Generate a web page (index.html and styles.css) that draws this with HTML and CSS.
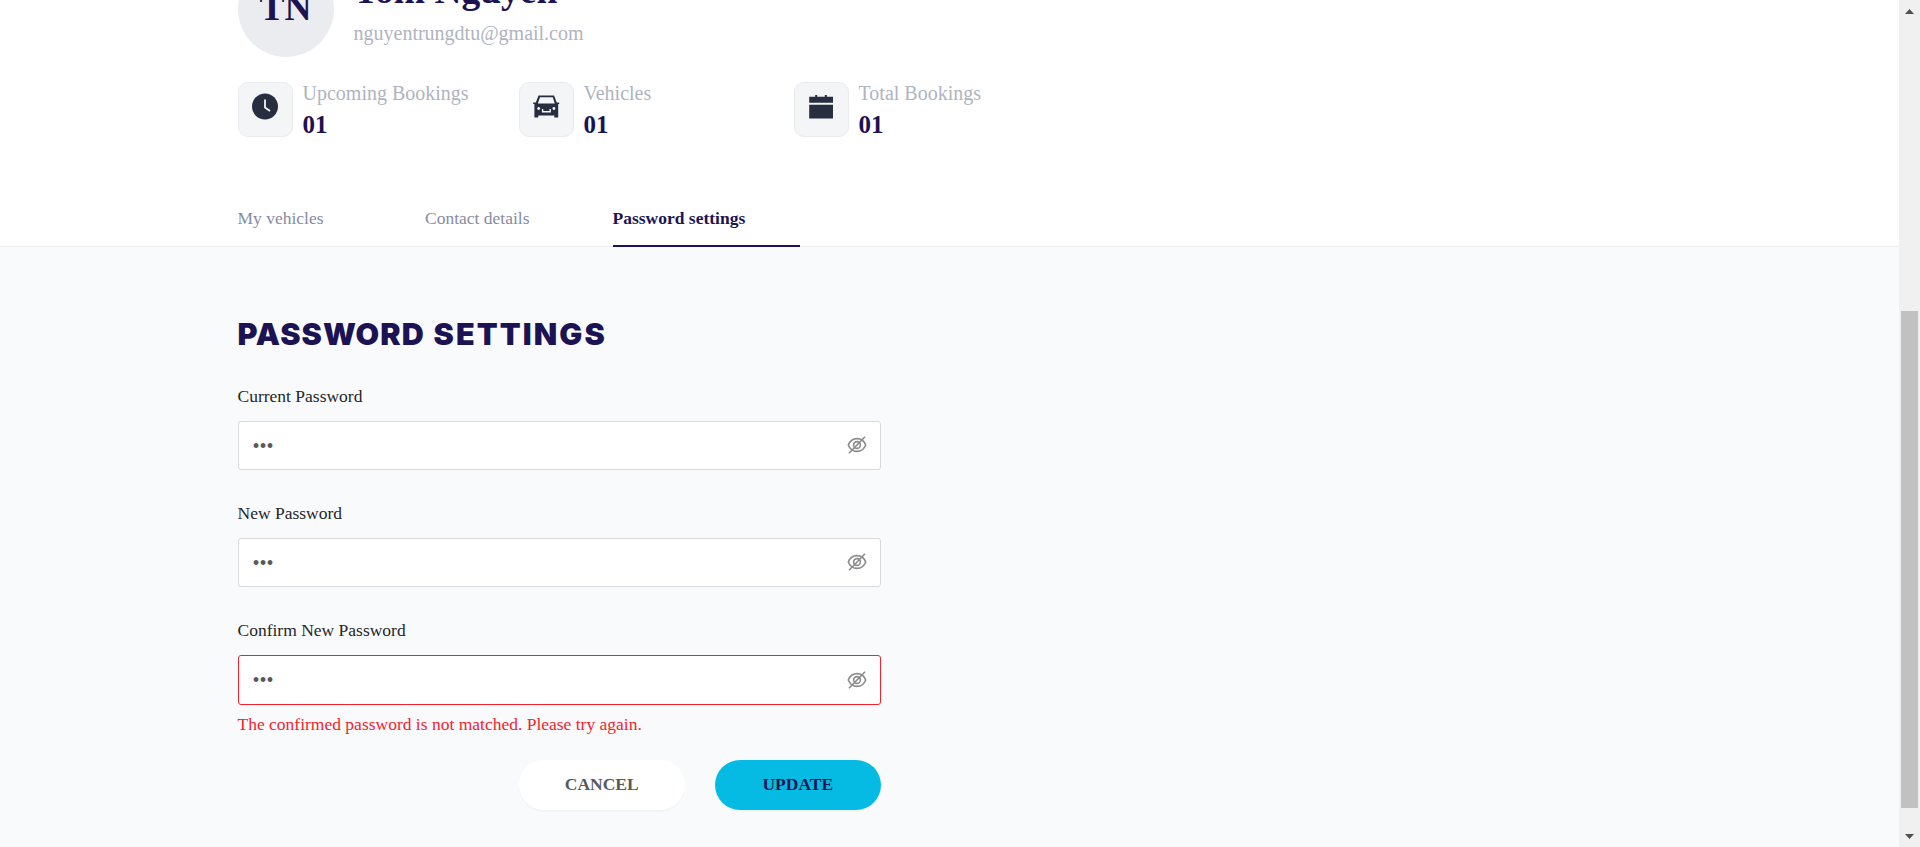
FILE: index.html
```html
<!DOCTYPE html>
<html lang="en">
<head>
<meta charset="utf-8">
<title>Password settings</title>
<link rel="stylesheet" href="styles.css">
</head>
<body>
<svg class="defs" aria-hidden="true">
  <symbol id="eye-off" viewBox="0 0 20 18">
    <path d="M1.300 9C3 4.600 6 2.600 10 2.600S17 4.600 18.700 9C17 13.400 14 15.400 10 15.400S3 13.400 1.300 9z"/>
    <circle cx="10" cy="9" r="3.4"/>
    <path d="M2 17.200 18 .8"/>
  </symbol>
</svg>
<div class="window">
  <main class="page">
    <header class="profile">
      <div class="identity">
        <div class="avatar">TN</div>
        <div class="who">
          <h1 class="name">Tom Nguyen</h1>
          <p class="email">nguyentrungdtu@gmail.com</p>
        </div>
      </div>
      <div class="stats">
        <div class="stat">
          <div class="tile"><svg width="27" height="27" viewBox="0 0 27 27"><circle cx="13" cy="13.5" r="13" fill="#272e3f"/><path d="M13 6.500v8l5 3.400" fill="none" stroke="#f4f5f7" stroke-width="1.8"/></svg></div>
          <div class="stat-text"><span class="stat-label">Upcoming Bookings</span><strong class="stat-value">01</strong></div>
        </div>
        <div class="stat">
          <div class="tile"><svg width="27" height="27" viewBox="0 0 27 27"><path fill="#272e3f" fill-rule="evenodd" d="M5.500 2.600h15.600l2.600 7h2.500v1.500h-1v13.500h-3.900v-2H5.300v2H1.400V11.100H.2V9.600h2.600zM7 4.300 4.800 10.400h17L19.700 4.300z"/><circle cx="5.700" cy="15.500" r="1.400" fill="#f4f5f7"/><circle cx="20.900" cy="15.500" r="1.400" fill="#f4f5f7"/><path d="M9.600 16v2.700h7.600V16" fill="none" stroke="#f4f5f7" stroke-width="1.400"/></svg></div>
          <div class="stat-text"><span class="stat-label">Vehicles</span><strong class="stat-value">01</strong></div>
        </div>
        <div class="stat">
          <div class="tile"><svg width="27" height="27" viewBox="0 0 27 27"><path fill="#272e3f" d="M1.200 3.800h6V2h2v1.800h7.600V2h2v1.800h6.200v6h-23.800zM1.200 11.700h23.800v13.700h-23.800z"/></svg></div>
          <div class="stat-text"><span class="stat-label">Total Bookings</span><strong class="stat-value">01</strong></div>
        </div>
      </div>
      <nav class="tabs">
        <a class="tab">My vehicles</a>
        <a class="tab">Contact details</a>
        <a class="tab active">Password settings</a>
      </nav>
    </header>
    <section class="settings">
      <h2 class="title">PASSWORD <span class="title-wide">SETTINGS</span></h2>
      <form class="form">
        <div class="field"><label class="label">Current Password</label>
          <div class="input"><span class="dots">•••</span><svg class="eye"><use href="#eye-off"/></svg></div></div>
        <div class="field"><label class="label">New Password</label>
          <div class="input"><span class="dots">•••</span><svg class="eye"><use href="#eye-off"/></svg></div></div>
        <div class="field"><label class="label">Confirm New Password</label>
          <div class="input invalid"><span class="dots">•••</span><svg class="eye"><use href="#eye-off"/></svg></div></div>
        <p class="error">The confirmed password is not matched. Please try again.</p>
        <div class="actions">
          <button type="button" class="btn cancel">CANCEL</button>
          <button type="button" class="btn update">UPDATE</button>
        </div>
      </form>
    </section>
  </main>
  <aside class="scrollbar">
    <svg class="arrow" viewBox="0 0 9 5"><path d="M0 5 4.500 0 9 5z"/></svg>
    <div class="thumb"></div>
    <svg class="arrow down" viewBox="0 0 9 5"><path d="M0 0 4.500 5 9 0z"/></svg>
  </aside>
</div>
</body>
</html>
```
FILE: styles.css
```css
* { box-sizing: border-box; margin: 0; padding: 0; }
body { font-family: "Liberation Serif", "Times New Roman", serif; overflow: hidden; font-size: 17.5px; }
.defs { display: none; }
.window { display: flex; height: 847px; overflow: hidden; }
.page { flex: 1; height: 847px; overflow: hidden; background: #f9fafc; }
.profile { background: #fff; padding-left: 237.500px; box-sizing: content-box; display: flex; flex-direction: column; border-bottom: 1px solid #eee; height: 246px; }
.identity { display: flex; gap: 20px; margin-top: -39px; height: 96px; }
.avatar { width: 96px; height: 96px; border-radius: 50%; background: #ebecf0; color: #1c1452; font-weight: bold; font-size: 37.500px; line-height: 93px; text-align: center; }
.name { color: #1c1452; font-size: 37.5px; line-height: 44px; margin-top: 8px; }
.email { color: #afb4c0; font-size: 20px; line-height: 24px; margin-top: 8px; }
.stats { display: flex; margin-top: 25px; height: 55px; }
.stat { display: flex; gap: 10px; width: 281px; }
.stat:nth-child(2) { width: 275px; }
.tile { width: 55px; height: 55px; border-radius: 10px; border: 1px solid #ebecf0; background: #f4f5f7; padding: 10px 13px; }
.tile svg { display: block; }
.stat-text { display: flex; flex-direction: column; }
.stat-label { color: #afb4c0; font-size: 20px; line-height: 24px; margin-top: -1px; }
.stat-value { color: #1c1452; font-size: 25px; line-height: 30px; margin-top: 5px; }
.tabs { display: flex; margin-top: auto; margin-bottom: -1px; }
.tab { width: 187.500px; height: 50px; line-height: 42px; color: #868c9d; border-bottom: 2px solid transparent; }
.tab.active { color: #1c1452; font-weight: bold; border-bottom-color: #1c1452; }
.settings { padding: 65px 0 0 237.500px; }
.title { font-family: Inter, "Liberation Sans", sans-serif; font-weight: 900; font-size: 30.500px; line-height: 44px; color: #1c1452; letter-spacing: 1.050px; word-spacing: 1.500px; }
.title-wide { letter-spacing: 2.100px; }
.form { width: 643.500px; padding-top: 30px; }
.field { height: 117px; }
.label { display: block; height: 35px; line-height: 20px; color: #262626; }
.input { display: flex; align-items: center; justify-content: space-between; height: 49px; border: 1px solid #d9d9d9; border-radius: 3px; background: #fff; padding: 0 13px 0 14px; }
.input.invalid { height: 50px; border-color: #f5222d; }
.dots { color: #595959; font-size: 20px; line-height: 20px; }
.eye { width: 20px; height: 18px; margin-top: -1px; fill: none; stroke: #8c8c8c; stroke-width: 1.600; }
.error { color: #f5222d; line-height: 20px; margin-top: -23px; }
.actions { display: flex; justify-content: flex-end; gap: 29.500px; margin-top: 26px; }
.btn { width: 166.500px; height: 50px; border: 0; border-radius: 25px; padding-bottom: 2px; font: bold 17.500px "Liberation Serif", serif; box-shadow: 0 2px 0 rgba(0,0,0,.025); }
.cancel { background: #fff; color: #595959; }
.update { background: #05bbe3; color: #1c1452; }
.scrollbar { width: 21px; background: #f0f0f0; display: flex; flex-direction: column; align-items: center; padding: 9px 0 8px; }
.arrow { width: 9px; height: 5px; fill: #505050; }
.thumb { width: 17px; height: 497px; margin-top: 297px; background: #c1c1c1; }
.arrow.down { margin-top: auto; }
```
